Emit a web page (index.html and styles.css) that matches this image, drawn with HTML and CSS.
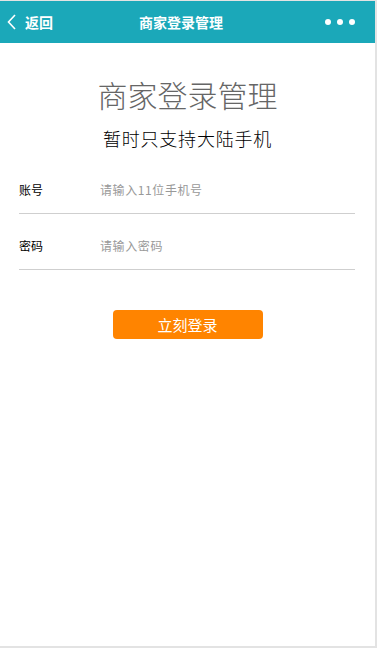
FILE: index.html
```html
<!DOCTYPE html>
<html lang="zh">
<head>
<meta charset="utf-8">
<title>商家登录管理</title>
<link rel="stylesheet" href="styles.css">
</head>
<body>
<div class="app">
  <header class="topbar">
    <div class="topbar-left">
      <svg class="chevron" width="9" height="16" viewBox="0 0 9 16"><path d="M8 1 L1.5 8 L8 15" fill="none" stroke="#fff" stroke-width="1.6"/></svg>
      <span class="back-text">返回</span>
    </div>
    <div class="topbar-title">商家登录管理</div>
    <div class="topbar-right">
      <span class="dot"></span><span class="dot"></span><span class="dot"></span>
    </div>
  </header>
  <main class="content">
    <h1 class="title">商家登录管理</h1>
    <p class="subtitle">暂时只支持大陆手机</p>
    <form class="form">
      <label class="row">
        <span class="label">账号</span>
        <input class="field" type="text" placeholder="请输入11位手机号">
      </label>
      <label class="row">
        <span class="label">密码</span>
        <input class="field" type="password" placeholder="请输入密码">
      </label>
      <div class="actions">
        <button class="submit" type="button">立刻登录</button>
      </div>
    </form>
  </main>
</div>
</body>
</html>
```
FILE: styles.css
```css
html, body {
  margin: 0;
  padding: 0;
  background: #e3e3e3;
}
body {
  padding-top: 1px;
  font-family: "Noto Sans CJK SC", "Liberation Sans", sans-serif;
}
.app {
  width: 375px;
  height: 645px;
  background: #fff;
}
.topbar {
  height: 42px;
  background: #1ba8b9;
  color: #fff;
  display: flex;
  align-items: center;
}
.topbar-left, .topbar-right {
  flex: 1;
  display: flex;
  align-items: center;
}
.topbar-left {
  padding-left: 7px;
}
.chevron {
  display: block;
}
.back-text {
  margin-left: 9px;
  font-size: 14px;
  font-weight: bold;
  line-height: 16px;
}
.topbar-title {
  font-size: 14px;
  font-weight: bold;
  line-height: 16px;
}
.topbar-right {
  justify-content: flex-end;
  gap: 6px;
  padding-right: 20px;
}
.dot {
  width: 6px;
  height: 6px;
  border-radius: 50%;
  background: #fff;
}
.content {
  padding-top: 36px;
}
.title {
  margin: 0;
  text-align: center;
  font-size: 30px;
  line-height: 30px;
  font-weight: 300;
  color: #666;
}
.subtitle {
  margin: 19px 0 0;
  text-align: center;
  font-size: 18px;
  line-height: 20px;
  letter-spacing: 0.8px;
  font-weight: 300;
  color: #000;
}
.form {
  margin: 10px 20px 0 19px;
}
.row {
  display: flex;
  align-items: center;
  padding: 24px 0 15px;
  border-bottom: 1px solid #cfcfcf;
}
.label {
  width: 81px;
  font-size: 12px;
  line-height: 16px;
  color: #000;
}
.field {
  flex: 1;
  border: none;
  outline: none;
  padding: 0;
  margin: 0;
  height: 16px;
  font-family: inherit;
  font-size: 12px;
  line-height: 16px;
  letter-spacing: 0.6px;
  color: #333;
  background: transparent;
}
.field::placeholder {
  color: #999;
}
.actions {
  display: flex;
  justify-content: center;
  margin-top: 40px;
  margin-left: -19px;
  margin-right: -20px;
}
.submit {
  width: 150px;
  height: 29px;
  border: none;
  border-radius: 4px;
  background: #ff8400;
  color: #fff;
  font-family: inherit;
  font-size: 15px;
  padding: 0;
}
```
